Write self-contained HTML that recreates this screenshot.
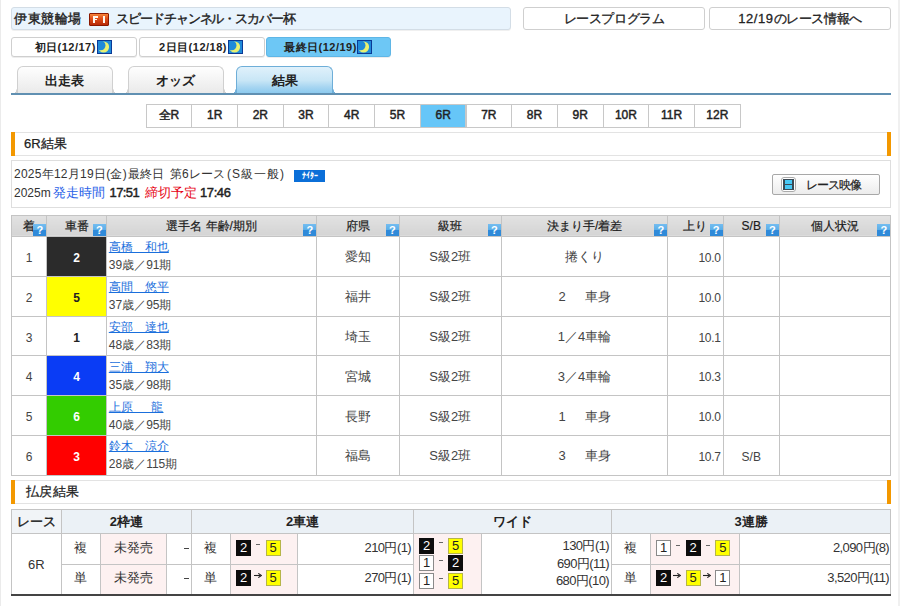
<!DOCTYPE html>
<html><head><meta charset="utf-8">
<style>
*{box-sizing:border-box}
i{font-style:normal}
html,body{margin:0;padding:0;width:900px;height:606px;overflow:hidden;background:#fff}
body{position:relative;font-family:"Liberation Sans",sans-serif;color:#333;font-size:12px}
.a{position:absolute}
.edgeL{left:0;top:0;width:1px;height:606px;background:#ebebeb}
.edgeR{left:898px;top:0;width:2px;height:606px;background:#f0f0f0}
.hdr{left:11px;top:7px;width:500px;height:23px;background:#e9f4fd;border:1px solid #d3dde6;border-radius:3px;box-shadow:0 1px 0 rgba(0,0,0,0.06)}
.hdr .t1{position:absolute;left:2px;top:2px;font-size:13px;color:#222;letter-spacing:0.5px;-webkit-text-stroke:0.4px #222}
.f1{position:absolute;left:77px;top:5px;width:20px;height:12.5px;background:linear-gradient(#f5843a,#e0501a 40%,#b82a08);border:1px solid #8a1800;border-radius:1px}
.fb{position:absolute;background:#fff8f0}
.hdr .t2{position:absolute;left:104px;top:2px;font-size:13px;color:#222;letter-spacing:-1.07px;-webkit-text-stroke:0.4px #222}
.btn{height:23px;top:7px;background:#fff;border:1px solid #cfcfcf;border-radius:3px;text-align:center;font-size:13px;line-height:22.5px;color:#222;letter-spacing:-0.4px;-webkit-text-stroke:0.3px #222}
.day{top:37px;height:20px;background:#fff;border:1px solid #cfcfcf;border-radius:3px;font-size:11px;font-weight:bold;line-height:18px;color:#222;letter-spacing:0.5px;box-shadow:0 1px 0 rgba(0,0,0,0.07)}
.day span{position:absolute;top:0}
.moon{position:absolute;top:2px;width:15px;height:14px;line-height:0}
.tab{top:66px;height:28px;border:1px solid #d0d0d0;border-bottom:none;border-radius:6px 6px 0 0;background:linear-gradient(#fefefe,#e9e9e9);font-size:13px;font-weight:bold;text-align:center;line-height:27.5px;color:#222}
.tab:before,.tab:after{content:"";position:absolute;bottom:0;width:5px;height:5px}
.tab:before{left:-6px;background:radial-gradient(circle at 0 0,rgba(255,255,255,0) 4.3px,#d0d0d0 4.8px,#d0d0d0 5.6px,#e9e9e9 6.2px)}
.tab:after{right:-6px;background:radial-gradient(circle at 100% 0,rgba(255,255,255,0) 4.3px,#d0d0d0 4.8px,#d0d0d0 5.6px,#e9e9e9 6.2px)}
.tab.on:before{background:radial-gradient(circle at 0 0,rgba(255,255,255,0) 4.3px,#6eaed8 4.8px,#6eaed8 5.6px,#88c8ee 6.2px)}
.tab.on:after{background:radial-gradient(circle at 100% 0,rgba(255,255,255,0) 4.3px,#6eaed8 4.8px,#6eaed8 5.6px,#88c8ee 6.2px)}
.tab.on{background:linear-gradient(#e0f1fb 0%,#c8e6f6 50%,#a6d5f1 75%,#88c8ee 100%);border-color:#6eaed8}
.bline{left:11px;top:93px;width:880px;height:2px;background:#6090b2}
.rn{top:104px;height:24px;border:1px solid #c8c8c8;background:#fff;font-size:12px;font-weight:normal;-webkit-text-stroke:0.45px #222;text-align:center;line-height:20.5px;color:#222}
.rn.on{background:#66c6f8}
.sec{left:11px;height:24px;width:880px;border-top:1px solid #e3e3e3;border-bottom:1px solid #e3e3e3;background:#fff}
.sec:before{content:"";position:absolute;left:0;top:-1px;width:4px;height:23.5px;background:#f39800}
.sec:after{content:"";position:absolute;right:0;top:-1px;width:4px;height:23.5px;background:#f39800}
.sec span{position:absolute;left:13px;top:2px;font-size:13px;color:#222;-webkit-text-stroke:0.25px #222}
.info{left:11px;top:160px;width:880px;height:48px;border:1px solid #dedede}
.inf span,.inf b{position:absolute;font-size:12px;color:#333;white-space:nowrap;line-height:16px}
.inf b{font-size:13px;color:#222;font-weight:normal;-webkit-text-stroke:0.45px #222}
.vbtn{left:772px;top:174px;width:108px;height:21px;border:1px solid #a8a8a8;border-radius:2px;background:linear-gradient(#fff,#ececec);font-size:13px;color:#222}
table{border-collapse:collapse;table-layout:fixed;position:absolute}
td,th{padding:0;border:1px solid #c4c4c4;overflow:hidden;white-space:nowrap}
.res{left:10.8px;top:214.5px;width:880px}
.res th{height:21.6px;background:linear-gradient(#e2e2e2,#d4d4d4);font-size:12px;font-weight:normal;-webkit-text-stroke:0.2px #222;color:#1a1a1a;position:relative;text-align:center;line-height:14px}
.res td{height:39.8px;font-size:12px;color:#444;text-align:center}
.q{-webkit-text-stroke:0;position:absolute;right:0;bottom:0;width:13px;height:12px;background:linear-gradient(#74bdf0 0%,#5aaee8 50%,#2f8ad9 50%,#2f8ad9 100%);color:#fff;font-size:11px;font-weight:bold;line-height:12px;text-align:center}
.car{font-weight:bold;font-size:13px}
.res td.d{padding-top:3px}
.res td.j{font-size:13px;padding-top:2px}
.res td.up{text-align:right;padding-right:2px;letter-spacing:-0.3px}
.nm{text-align:left!important;padding-left:2px!important;line-height:18px}
.nm a{color:#1a6fdc;text-decoration:underline}
.pay{left:10.5px;top:509px;width:880px}
.pay th{height:24px;background:#ebf1f6;font-weight:bold;font-size:13px;color:#222}
.pay td{height:30.5px;font-size:13px;color:#333;text-align:center}
.pk{background:#fdf1f1}
.pt span,.pt i{position:absolute;font-size:13px;line-height:16px;color:#333;white-space:nowrap}
.pt .am{letter-spacing:-0.6px}
.pt .ds{width:5px;height:1px;background:#444}
.pt .sd{width:4px;height:1.2px;background:#666}
.pt .ar{font-size:12px;line-height:10px;color:#222}
.nb{display:block;width:15px;height:16px;border:1px solid #999;font-size:13px!important;line-height:14px!important;text-align:center}
.pt .k1{background:#fff;color:#222;border-color:#8a8a8a}
.pt .k2{background:#0d0d0d;color:#fff;border-color:#0d0d0d}
.pt .k5{background:#ffff00;color:#222;border-color:#b5b54a}
</style></head><body>
<div class="a edgeL"></div><div class="a edgeR"></div>

<div class="a hdr"><span class="t1">伊東競輪場</span><div class="f1"><i class="fb" style="left:2.9px;top:2.2px;width:2.1px;height:6.8px"></i><i class="fb" style="left:2.9px;top:2.2px;width:5px;height:1.8px"></i><i class="fb" style="left:2.9px;top:4.9px;width:4px;height:1.4px"></i><i class="fb" style="left:12.7px;top:2.2px;width:2.1px;height:6.8px"></i></div><span class="t2">スピードチャンネル・スカバー杯</span></div>
<div class="a btn" style="left:523px;width:182px">レースプログラム</div>
<div class="a btn" style="left:709px;width:182px"><span style="letter-spacing:0.6px">12/19</span>のレース情報へ</div>

<div class="a day" style="left:11px;width:126px"><span style="left:22.5px">初日(12/17)</span><i class="moon" style="left:85px"><svg width="15" height="14" viewBox="0 0 15 14"><rect x="0" y="0" width="15" height="14" fill="#1f8ad9"/><circle cx="6.6" cy="7" r="5.5" fill="#e9f070"/><circle cx="3.7" cy="5.5" r="4.8" fill="#1f8ad9"/><rect x="0.5" y="0.5" width="14" height="13" fill="none" stroke="#0a3a96"/></svg></i></div>
<div class="a day" style="left:139px;width:126px"><span style="left:19px">2日目(12/18)</span><i class="moon" style="left:88px"><svg width="15" height="14" viewBox="0 0 15 14"><rect x="0" y="0" width="15" height="14" fill="#1f8ad9"/><circle cx="6.6" cy="7" r="5.5" fill="#e9f070"/><circle cx="3.7" cy="5.5" r="4.8" fill="#1f8ad9"/><rect x="0.5" y="0.5" width="14" height="13" fill="none" stroke="#0a3a96"/></svg></i></div>
<div class="a day" style="left:266px;width:125px;background:#6dc7f5;border-color:#5fb6e6"><span style="left:17px">最終日(12/19)</span><i class="moon" style="left:90px"><svg width="15" height="14" viewBox="0 0 15 14"><rect x="0" y="0" width="15" height="14" fill="#1f8ad9"/><circle cx="6.6" cy="7" r="5.5" fill="#e9f070"/><circle cx="3.7" cy="5.5" r="4.8" fill="#1f8ad9"/><rect x="0.5" y="0.5" width="14" height="13" fill="none" stroke="#0a3a96"/></svg></i></div>

<div class="a tab" style="left:16.5px;width:96.5px">出走表</div>
<div class="a tab" style="left:127.5px;width:96.5px">オッズ</div>
<div class="a tab on" style="left:236px;width:97px">結果</div>
<div class="a bline"></div>

<div class="a rn" style="left:145.6px;width:46.7px">全R</div>
<div class="a rn" style="left:191.3px;width:46.7px">1R</div>
<div class="a rn" style="left:237.0px;width:46.7px">2R</div>
<div class="a rn" style="left:282.7px;width:46.7px">3R</div>
<div class="a rn" style="left:328.4px;width:46.7px">4R</div>
<div class="a rn" style="left:374.1px;width:46.7px">5R</div>
<div class="a rn on" style="left:419.8px;width:46.7px">6R</div>
<div class="a rn" style="left:465.5px;width:46.7px">7R</div>
<div class="a rn" style="left:511.2px;width:46.7px">8R</div>
<div class="a rn" style="left:556.9px;width:46.7px">9R</div>
<div class="a rn" style="left:602.6px;width:46.7px">10R</div>
<div class="a rn" style="left:648.3px;width:46.7px">11R</div>
<div class="a rn" style="left:694.0px;width:46.7px">12R</div>

<div class="a sec" style="top:132px"><span style="top:2px">6R結果</span></div>

<div class="a info">
<div class="inf">
<span style="left:2px;top:4.5px;letter-spacing:0.25px">2025年12月19日(金)</span>
<span style="left:116px;top:5px">最終日</span>
<span style="left:158px;top:4.5px">第6レース</span>
<span style="left:215px;top:4.5px;letter-spacing:1px">(S級一般)</span>
<span style="left:2px;top:24px">2025m</span>
<span style="left:41px;top:24px;font-size:13px;color:#2b63e8">発走時間</span>
<b style="left:97.5px;top:24px;letter-spacing:-0.6px">17:51</b>
<span style="left:132.5px;top:24px;font-size:13px;color:#e60012">締切予定</span>
<b style="left:188px;top:24px;letter-spacing:-0.4px">17:46</b>
</div>
<div class="a" style="left:282.3px;top:9px;width:31px;height:12px;background:#0b6fd8;color:#fff;font-size:8px;line-height:12px;text-align:center;font-weight:bold">ﾅｲﾀｰ</div>
</div>
<div class="a vbtn"><i class="a" style="left:8px;top:2px;width:15px;height:15px;border:1px solid #aaa;border-radius:3px;background:#fff"><i class="a" style="left:1px;top:1px;width:11px;height:11px;background:#3b4a55"><i class="a" style="left:2px;top:1px;width:7px;height:4px;background:#48c8f5"></i><i class="a" style="left:2px;top:6px;width:7px;height:4px;background:#48c8f5"></i></i></i><span class="a" style="left:33px;top:2px;font-size:12px;letter-spacing:-1px;-webkit-text-stroke:0.2px #222">レース映像</span></div>

<table class="a res">
<colgroup><col style="width:35.5px"><col style="width:59.5px"><col style="width:210.5px"><col style="width:82.5px"><col style="width:102px"><col style="width:166.5px"><col style="width:55.3px"><col style="width:56.4px"><col style="width:111.3px"></colgroup>
<tr><th>着<i class="q">?</i></th><th>車番<i class="q">?</i></th><th>選手名 年齢/期別<i class="q">?</i></th><th>府県<i class="q">?</i></th><th>級班<i class="q">?</i></th><th>決まり手/着差<i class="q">?</i></th><th>上り<i class="q">?</i></th><th>S/B<i class="q">?</i></th><th>個人状況<i class="q">?</i></th></tr>
<tr><td class="d">1</td><td class="car d" style="background:#2b2b2b;color:#fff">2</td><td class="nm"><a>高橋　和也</a><br>39歳／91期</td><td class="j">愛知</td><td class="j">S級2班</td><td class="j">捲くり</td><td class="d up">10.0</td><td class="d"></td><td></td></tr>
<tr><td class="d">2</td><td class="car d" style="background:#ffff00;color:#222">5</td><td class="nm"><a>高間　悠平</a><br>37歳／95期</td><td class="j">福井</td><td class="j">S級2班</td><td class="j">2<span style="display:inline-block;width:19px"></span>車身</td><td class="d up">10.0</td><td class="d"></td><td></td></tr>
<tr><td class="d">3</td><td class="car d" style="background:#fff;color:#222">1</td><td class="nm"><a>安部　達也</a><br>48歳／83期</td><td class="j">埼玉</td><td class="j">S級2班</td><td class="j">1／4車輪</td><td class="d up">10.1</td><td class="d"></td><td></td></tr>
<tr><td class="d">4</td><td class="car d" style="background:#0a3cf5;color:#fff">4</td><td class="nm"><a>三浦　翔大</a><br>35歳／98期</td><td class="j">宮城</td><td class="j">S級2班</td><td class="j">3／4車輪</td><td class="d up">10.3</td><td class="d"></td><td></td></tr>
<tr><td class="d">5</td><td class="car d" style="background:#33cc00;color:#fff">6</td><td class="nm"><a>上原　&nbsp;&nbsp;龍</a><br>40歳／95期</td><td class="j">長野</td><td class="j">S級2班</td><td class="j">1<span style="display:inline-block;width:19px"></span>車身</td><td class="d up">10.0</td><td class="d"></td><td></td></tr>
<tr><td class="d">6</td><td class="car d" style="background:#ff0000;color:#fff">3</td><td class="nm"><a>鈴木　涼介</a><br>28歳／115期</td><td class="j">福島</td><td class="j">S級2班</td><td class="j">3<span style="display:inline-block;width:19px"></span>車身</td><td class="d up">10.7</td><td class="d">S/B</td><td></td></tr>
</table>

<div class="a sec" style="top:480px"><span style="left:14.5px;top:2px;letter-spacing:0.5px">払戻結果</span></div>

<table class="a pay">
<colgroup><col style="width:50px"><col style="width:39.5px"><col style="width:66.2px"><col style="width:25px"><col style="width:38.7px"><col style="width:67.4px"><col style="width:115.5px"><col style="width:68.4px"><col style="width:130px"><col style="width:39px"><col style="width:89.3px"><col style="width:150.7px"></colgroup>
<tr><th style="font-weight:normal;background:#f1f4f7;-webkit-text-stroke:0.4px #222">レース</th><th colspan="3">2枠連</th><th colspan="3">2車連</th><th colspan="2">ワイド</th><th colspan="3">3連勝</th></tr>
<tr><td rowspan="2"></td><td></td><td class="pk"></td><td></td><td></td><td class="pk"></td><td></td><td rowspan="2" class="pk"></td><td rowspan="2"></td><td></td><td class="pk"></td><td></td></tr>
<tr><td></td><td class="pk"></td><td></td><td></td><td class="pk"></td><td></td><td></td><td class="pk"></td><td></td></tr>
</table>
<div class="a" style="left:11px;top:594px;width:880px;height:2px;background:#444"></div>
<div class="pt">
<span style="left:28px;top:557px">6R</span>
<span style="left:74px;top:540px">複</span><span style="left:74px;top:570px">単</span>
<span style="left:114px;top:540px">未発売</span><span style="left:114px;top:570px">未発売</span>
<span class="ds" style="left:183.5px;top:548px"></span><span class="ds" style="left:183.5px;top:578px"></span>
<span style="left:204px;top:540px">複</span><span style="left:204px;top:570px">単</span>
<i class="nb k2" style="left:236px;top:540px">2</i><span class="sd" style="left:256px;top:544px"></span><i class="nb k5" style="left:265.5px;top:540px">5</i>
<i class="nb k2" style="left:236px;top:570px">2</i><span class="ar" style="left:254px;top:573px"><svg width="8" height="5" viewBox="0 0 8 5" style="display:block"><path d="M0 2.5H6.5" stroke="#222" stroke-width="1.1"/><path d="M4.3 0.4L7.4 2.5L4.3 4.6" fill="none" stroke="#222" stroke-width="1.1"/></svg></span><i class="nb k5" style="left:265.5px;top:570px">5</i>
<span class="am" style="right:489px;top:540px">210円(1)</span><span class="am" style="right:489px;top:570px">270円(1)</span>
<i class="nb k2" style="left:419px;top:537.5px">2</i><span class="sd" style="left:439px;top:542px"></span><i class="nb k5" style="left:448px;top:537.5px">5</i>
<i class="nb k1" style="left:419px;top:555px">1</i><span class="sd" style="left:439px;top:559.5px"></span><i class="nb k2" style="left:448px;top:555px">2</i>
<i class="nb k1" style="left:419px;top:573px">1</i><span class="sd" style="left:439px;top:577.5px"></span><i class="nb k5" style="left:448px;top:573px">5</i>
<span class="am" style="right:291px;top:538px">130円(1)</span><span class="am" style="right:291px;top:555.5px">690円(11)</span><span class="am" style="right:291px;top:573px">680円(10)</span>
<span style="left:624px;top:540px">複</span><span style="left:624px;top:570px">単</span>
<i class="nb k1" style="left:656px;top:540px">1</i><span class="sd" style="left:676px;top:544.5px"></span><i class="nb k2" style="left:685.5px;top:540px">2</i><span class="sd" style="left:706px;top:544.5px"></span><i class="nb k5" style="left:715.3px;top:540px">5</i>
<i class="nb k2" style="left:656px;top:570px">2</i><span class="ar" style="left:673px;top:572.5px"><svg width="8" height="5" viewBox="0 0 8 5" style="display:block"><path d="M0 2.5H6.5" stroke="#222" stroke-width="1.1"/><path d="M4.3 0.4L7.4 2.5L4.3 4.6" fill="none" stroke="#222" stroke-width="1.1"/></svg></span><i class="nb k5" style="left:685.5px;top:570px">5</i><span class="ar" style="left:702.5px;top:572.5px"><svg width="8" height="5" viewBox="0 0 8 5" style="display:block"><path d="M0 2.5H6.5" stroke="#222" stroke-width="1.1"/><path d="M4.3 0.4L7.4 2.5L4.3 4.6" fill="none" stroke="#222" stroke-width="1.1"/></svg></span><i class="nb k1" style="left:715.3px;top:570px">1</i>
<span class="am" style="right:11px;top:540px">2,090円(8)</span><span class="am" style="right:11px;top:570px">3,520円(11)</span>
</div>
</body></html>
